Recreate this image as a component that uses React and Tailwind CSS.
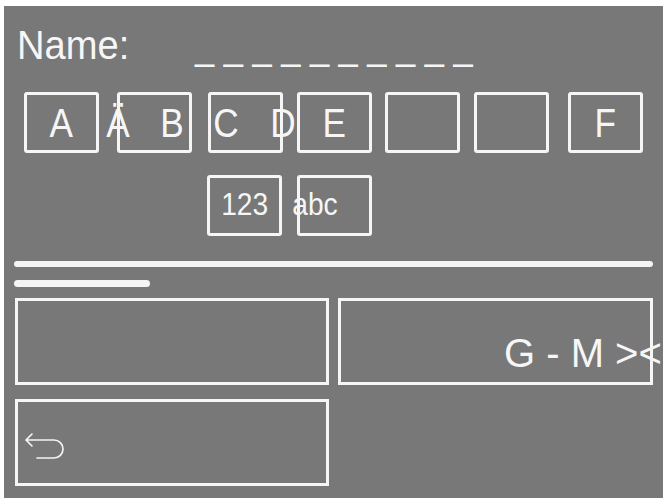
import React from "react";

const FONT = "font-['Liberation_Sans',Arial,sans-serif]";

function Key({ className = "", children, center = true }) {
  return (
    <div
      className={`w-[75px] h-[61px] shrink-0 border-[3px] border-[#f6f6f6] rounded-[3px] flex items-center ${center ? "justify-center" : "justify-start"} ${className}`}
    >
      {children}
    </div>
  );
}

function Glyph({ className = "", children }) {
  return (
    <span className={`w-0 flex justify-center whitespace-nowrap scale-x-[0.88] ${className}`}>
      {children}
    </span>
  );
}

function ReturnIcon() {
  return (
    <svg width="42" height="30" viewBox="0 0 42 30" fill="none">
      <path
        d="M8 3 L2 9 L8 15 M2 9 H30 A9 9 0 0 1 30 27 H13"
        stroke="#f4f4f4"
        strokeWidth="1.7"
        strokeLinecap="round"
        strokeLinejoin="round"
      />
    </svg>
  );
}

export default function App() {
  return (
    <div className={`w-[665px] h-[501px] bg-white pt-[6px] pl-[4px] ${FONT}`}>
      <div className="w-[659px] h-[492px] bg-[#787878] overflow-hidden flex flex-col text-[#f6f6f6]">
        {/* Name row */}
        <div className="mt-[19px] flex items-start pl-[13px] text-[41px] leading-none">
          <span className="inline-block origin-left scale-x-[0.93] whitespace-nowrap">Name:</span>
          <span className="ml-[57px] inline-block origin-left scale-x-[0.84] whitespace-pre">_ _ _ _ _ _ _ _ _ _</span>
        </div>

        {/* Key row 1 */}
        <div className="mt-[26px] flex text-[40px] leading-none">
          <Key className="ml-[20px]">
            <span className="inline-block scale-x-[0.88]">A</span>
          </Key>
          <Key className="ml-[18px]" center={false}>
            <Glyph className="ml-[-2.5px]">Ä</Glyph>
            <Glyph className="ml-[54.5px]">B</Glyph>
          </Key>
          <Key className="ml-[16px]" center={false}>
            <Glyph className="ml-[15px]">C</Glyph>
            <Glyph className="ml-[56.5px]">D</Glyph>
          </Key>
          <Key className="ml-[14px]">
            <span className="inline-block scale-x-[0.88]">E</span>
          </Key>
          <Key className="ml-[13px]" />
          <Key className="ml-[14px]" />
          <Key className="ml-[19px]">
            <span className="inline-block scale-x-[0.88]">F</span>
          </Key>
        </div>

        {/* Key row 2 */}
        <div className="mt-[22px] flex text-[32px] leading-none">
          <Key className="ml-[203px] pb-[3px]">
            <span className="inline-block scale-x-[0.88]">123</span>
          </Key>
          <Key className="ml-[15px] pb-[3px]" center={false}>
            <Glyph className="ml-[15px]">abc</Glyph>
          </Key>
        </div>

        {/* Progress bars */}
        <div className="mt-[25px] ml-[10px] w-[639px] h-[6px] rounded-full bg-[#f4f4f4]" />
        <div className="mt-[13px] ml-[10px] w-[136px] h-[7px] rounded-full bg-[#f4f4f4]" />

        {/* Buttons */}
        <div className="mt-[11px] ml-[11px] flex gap-[9px]">
          <div className="w-[314px] h-[87px] shrink-0 border-[3px] border-[#f6f6f6]" />
          <div className="w-[315px] h-[87px] shrink-0 border-[3px] border-[#f6f6f6] flex items-start pl-[163px] pt-[32px]">
            <span className="text-[40px] leading-none whitespace-pre">G - M &gt;&lt;</span>
          </div>
        </div>
        <div className="mt-[14px] ml-[11px] w-[314px] h-[87px] border-[3px] border-[#f6f6f6] flex items-start pl-[6px] pt-[29px]">
          <ReturnIcon />
        </div>
      </div>
    </div>
  );
}
